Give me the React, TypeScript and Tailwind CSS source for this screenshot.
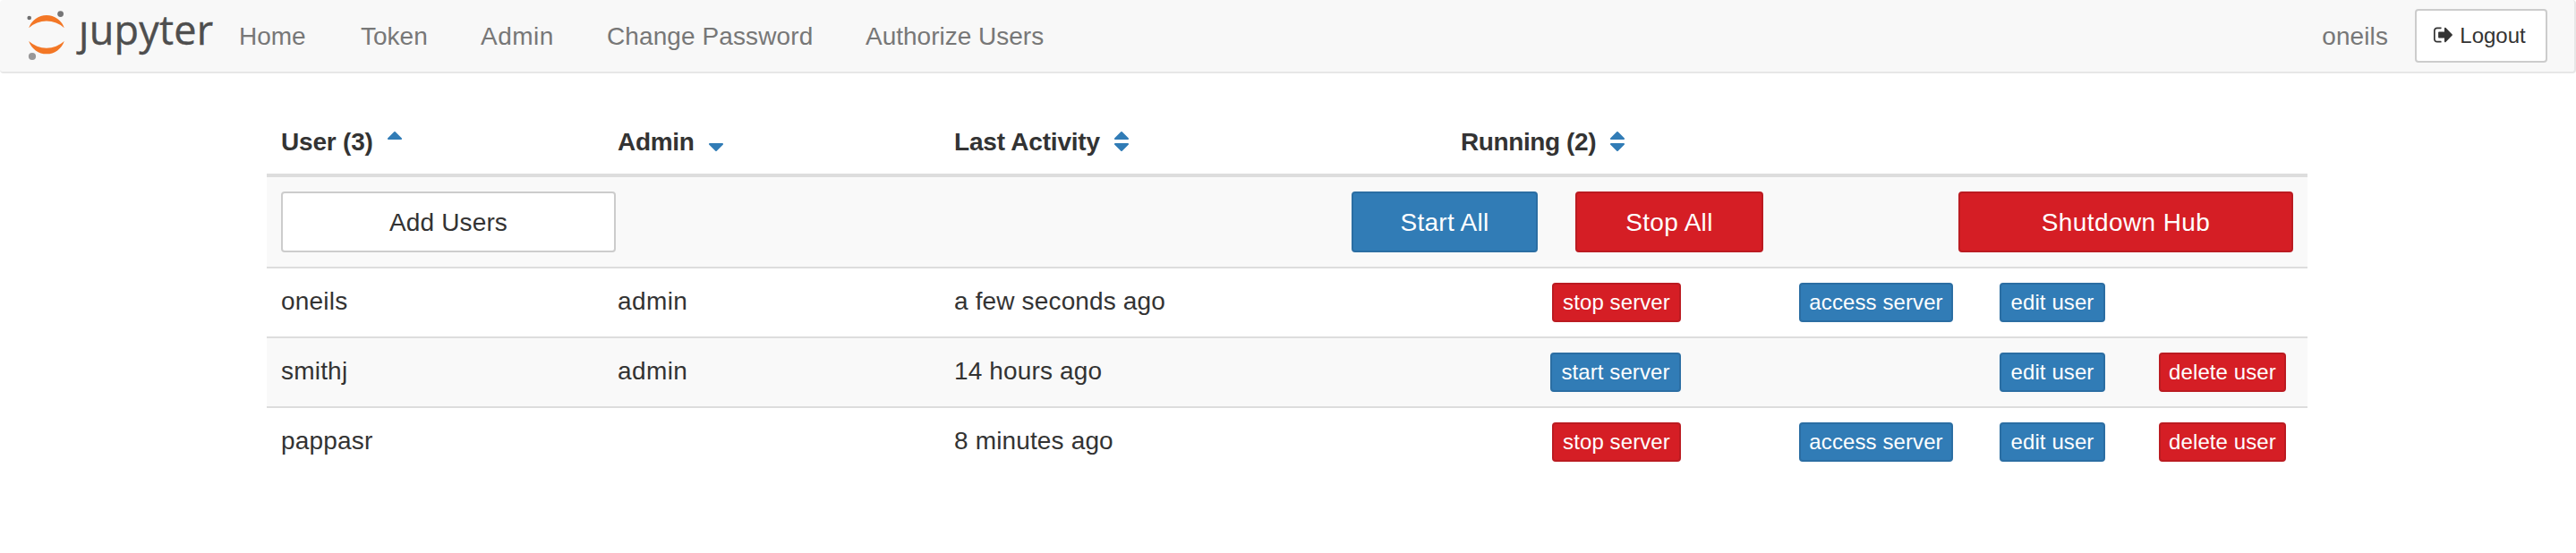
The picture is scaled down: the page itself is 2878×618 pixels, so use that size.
import type { ReactNode } from "react";

const UP = "M1024 704q0 26-19 45t-45 19h-896q-26 0-45-19t-19-45 19-45l448-448q19-19 45-19t45 19l448 448q19 19 19 45z";
const DOWN = "M1024 1088q0 26-19 45l-448 448q-19 19-45 19t-45-19l-448-448q-19-19-19-45t19-45 45-19h896q26 0 45 19t19 45z";

function SortIcon({ up = false, down = false }: { up?: boolean; down?: boolean }) {
  return (
    <svg viewBox="0 0 1024 1792" className="mt-1.5 ml-4 h-7 w-4 shrink-0 fill-[#317cb6]">
      {up && <path d={UP} />}
      {down && <path d={DOWN} />}
    </svg>
  );
}

function SignOutIcon() {
  return (
    <svg viewBox="0 0 1568 1792" className="mt-[5px] h-6 w-[21px] shrink-0 fill-[#333]">
      <path d="M640 1440q0 4 1 20t.5 26.5-3 23.5-10 19.5-20.5 6.5h-320q-119 0-203.5-84.5t-84.5-203.5v-704q0-119 84.5-203.5t203.5-84.5h320q13 0 22.5 9.5t9.5 22.5q0 4 1 20t.5 26.5-3 23.5-10 19.5-20.5 6.5h-320q-66 0-113 47t-47 113v704q0 66 47 113t113 47h312l11.5 1 11.5 3 8 5.5 7 9 2 13.5zm928-544q0 26-19 45l-544 544q-19 19-45 19t-45-19-19-45v-288h-448q-26 0-45-19t-19-45v-384q0-26 19-45t45-19h448v-288q0-26 19-45t45-19 45 19l544 544q19 19 19 45z" />
    </svg>
  );
}

function Logo() {
  return (
    <div className="flex h-20 w-[267px] shrink-0">
      <svg viewBox="0 0 86 80" className="h-20 w-[86px] shrink-0">
        <path fill="#f37726" d="M32.2 31.2A20.9 20.9 0 0 1 71.8 31.2A29.6 29.6 0 0 0 32.2 31.2Z" />
        <path fill="#f37726" d="M32.2 46.1A20.9 20.9 0 0 0 71.8 46.1A29.6 29.6 0 0 1 32.2 46.1Z" />
        <circle cx="67.6" cy="15.6" r="3.4" fill="#767677" />
        <circle cx="32.7" cy="20" r="2.3" fill="#6f6f70" />
        <circle cx="36" cy="63" r="4.1" fill="#989798" />
      </svg>
      <div className="pl-[2px] pt-[2px] font-['Open_Sans','Noto_Sans',sans-serif] text-[45px] leading-[62px] tracking-[0.25px] text-[#4e4e4e] [-webkit-text-stroke:0.4px_#4e4e4e]">
        {/* the wordmark's j is drawn without its dot */}
        <span className="inline-block [clip-path:inset(22px_-8px_-8px_-12px)]">j</span>upyter
      </div>
    </div>
  );
}

type Tone = "blue" | "red" | "white";
const tones: Record<Tone, string> = {
  blue: "border-[#2b6ea3] bg-[#317cb6] text-white",
  red: "border-[#bb1b21] bg-[#d51e25] text-white",
  white: "border-[#ccc] bg-white text-[#333]",
};

function Button({ tone, className, children }: { tone: Tone; className: string; children: ReactNode }) {
  return (
    <button className={`flex shrink-0 items-start justify-center whitespace-nowrap rounded border-2 ${tones[tone]} ${className}`}>
      {children}
    </button>
  );
}

const big = "h-[68px] pt-3 text-[28px] leading-[42px]";
const small = "h-11 pt-0.5 text-2xl leading-9 tracking-[0.1px]";

interface User {
  name: string;
  admin: boolean;
  activity: string;
  running: boolean;
  deletable: boolean;
}

const users: User[] = [
  { name: "oneils", admin: true, activity: "a few seconds ago", running: true, deletable: false },
  { name: "smithj", admin: true, activity: "14 hours ago", running: false, deletable: true },
  { name: "pappasr", admin: false, activity: "8 minutes ago", running: true, deletable: true },
];

function UserRow({ user, striped }: { user: User; striped: boolean }) {
  return (
    <div className={`flex h-[78px] border-t-2 border-[#ddd] pt-4 ${striped ? "bg-[#f9f9f9]" : ""}`}>
      <div className="w-[376px] pl-4 tracking-[0.2px]">{user.name}</div>
      <div className="w-[376px] pl-4 tracking-[0.4px]">{user.admin ? "admin" : ""}</div>
      <div className="w-[450px] pl-4 tracking-[0.15px]">{user.activity}</div>
      <div className="flex w-[394px] justify-end pr-4">
        {user.running ? (
          <Button tone="red" className={`${small} w-36`}>stop server</Button>
        ) : (
          <Button tone="blue" className={`${small} w-[146px]`}>start server</Button>
        )}
      </div>
      <div className="flex w-[304px] justify-end pr-4">
        {user.running && <Button tone="blue" className={`${small} w-[172px]`}>access server</Button>}
      </div>
      <div className="w-[198px] pl-9">
        <Button tone="blue" className={`${small} w-[118px]`}>edit user</Button>
      </div>
      <div className="pl-4">
        {user.deletable && <Button tone="red" className={`${small} w-[142px]`}>delete user</Button>}
      </div>
    </div>
  );
}

export default function App() {
  return (
    <div className="min-h-[618px] w-[2878px] bg-white font-['Liberation_Sans',Arial,sans-serif] text-[28px] leading-[42px] text-[#333]">
      <nav className="flex h-[82px] rounded border-r-2 border-b-2 border-[#e7e7e7] bg-[#f8f8f8] text-[#777]">
        <Logo />
        <a className="w-[136px] pt-5">Home</a>
        <a className="w-[134px] pt-5">Token</a>
        <a className="w-[141px] pt-5 tracking-[0.5px]">Admin</a>
        <a className="w-[289px] pt-5 tracking-[0.1px]">Change Password</a>
        <a className="pt-5">Authorize Users</a>
        <div className="ml-auto flex pr-[30px]">
          <span className="mr-[30px] pt-5 tracking-[0.1px]">oneils</span>
          <Button tone="white" className="mt-2.5 h-[60px] w-[148px] pt-2.5 pr-[3px] text-2xl leading-9">
            <SignOutIcon />
            <span className="ml-2">Logout</span>
          </Button>
        </div>
      </nav>

      <main className="mt-10 ml-[298px] w-[2280px]">
        <div className="flex h-[76px] border-b-4 border-[#ddd] pt-4 font-bold">
          <div className="flex w-[376px] pl-4 tracking-[-0.2px]">User (3)<SortIcon up /></div>
          <div className="flex w-[376px] pl-4 tracking-[-0.3px]">Admin<SortIcon down /></div>
          <div className="flex w-[566px] pl-4 tracking-[-0.2px]">Last Activity<SortIcon up down /></div>
          <div className="flex pl-4 tracking-[-0.4px]">Running (2)<SortIcon up down /></div>
        </div>
        <div className="flex h-[100px] bg-[#f9f9f9] px-4 pt-4">
          <Button tone="white" className={`${big} w-[374px] tracking-[0.15px]`}>Add Users</Button>
          <Button tone="blue" className={`${big} ml-auto w-[208px] tracking-[0.3px]`}>Start All</Button>
          <Button tone="red" className={`${big} ml-[42px] w-[210px] tracking-[0.3px]`}>Stop All</Button>
          <Button tone="red" className={`${big} ml-[218px] w-[374px] tracking-[0.4px]`}>Shutdown Hub</Button>
        </div>
        {users.map((user, i) => (
          <UserRow key={user.name} user={user} striped={i % 2 === 1} />
        ))}
      </main>
    </div>
  );
}
